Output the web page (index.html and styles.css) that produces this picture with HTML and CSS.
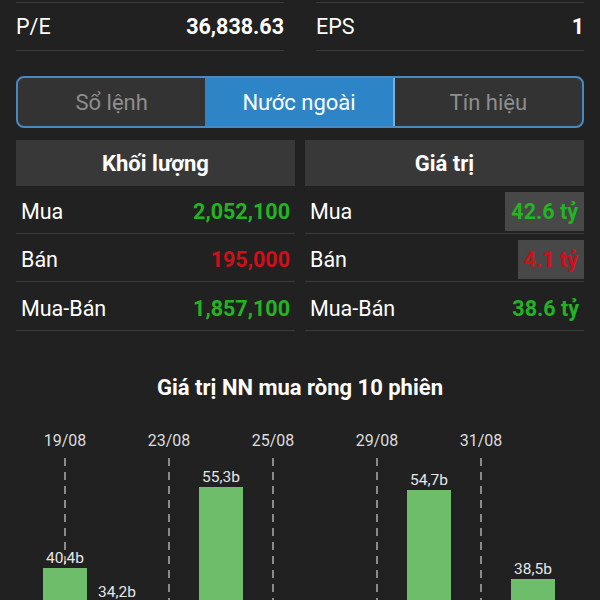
FILE: index.html
```html
<!DOCTYPE html>
<html lang="vi">
<head>
    <meta charset="UTF-8">
    <meta name="viewport" content="width=device-width, initial-scale=1.0">
    <title>Nước ngoài</title>
    <link rel="stylesheet" href="styles.css">
</head>
<body>
    <div class="container">
        <div class="stats">
            <div class="stat-row">
                <span class="stat-label">P/E</span>
                <span class="stat-value">36,838.63</span>
            </div>
            <div class="stat-row">
                <span class="stat-label">EPS</span>
                <span class="stat-value">1</span>
            </div>
        </div>

        <div class="tabs">
            <button class="tab">Sổ lệnh</button>
            <button class="tab active">Nước ngoài</button>
            <button class="tab last">Tín hiệu</button>
        </div>

        <div class="tables">
            <div class="table">
                <div class="table-head">Khối lượng</div>
                <div class="table-row">
                    <span class="row-label">Mua</span>
                    <span class="row-value up">2,052,100</span>
                </div>
                <div class="table-row">
                    <span class="row-label">Bán</span>
                    <span class="row-value down">195,000</span>
                </div>
                <div class="table-row">
                    <span class="row-label">Mua-Bán</span>
                    <span class="row-value up">1,857,100</span>
                </div>
            </div>
            <div class="table">
                <div class="table-head">Giá trị</div>
                <div class="table-row">
                    <span class="row-label">Mua</span>
                    <span class="row-value up boxed">42.6 tỷ</span>
                </div>
                <div class="table-row">
                    <span class="row-label">Bán</span>
                    <span class="row-value down boxed">4.1 tỷ</span>
                </div>
                <div class="table-row">
                    <span class="row-label">Mua-Bán</span>
                    <span class="row-value up">38.6 tỷ</span>
                </div>
            </div>
        </div>

        <h2 class="chart-title">Giá trị NN mua ròng 10 phiên</h2>

        <div class="chart-view">
            <div class="chart" id="chart"></div>
        </div>
    </div>

    <script>
        // giá trị mua ròng (tỷ), mỗi phiên
        const sessions = [
            { date: '19/08', value: 40.4 },
            { date: '', value: 34.2 },
            { date: '23/08', value: 18.6 },
            { date: '', value: 55.3 },
            { date: '25/08', value: 12.9 },
            { date: '', value: 21.4 },
            { date: '29/08', value: 16.2 },
            { date: '', value: 54.7 },
            { date: '31/08', value: 24.8 },
            { date: '', value: 38.5 }
        ];
        const pxPerUnit = 5.44;
        const chart = document.getElementById('chart');

        sessions.forEach(s => {
            const col = document.createElement('div');
            col.className = 'col';

            const date = document.createElement('div');
            date.className = 'date';
            date.textContent = s.date;
            col.appendChild(date);

            const track = document.createElement('div');
            track.className = s.date ? 'track dashed' : 'track';

            const label = document.createElement('div');
            label.className = 'bar-label';
            label.textContent = s.value.toFixed(1).replace('.', ',') + 'b';
            track.appendChild(label);

            const bar = document.createElement('div');
            bar.className = 'bar';
            bar.style.height = Math.round(s.value * pxPerUnit) + 'px';
            track.appendChild(bar);

            col.appendChild(track);
            chart.appendChild(col);
        });
    </script>
</body>
</html>
```

FILE: styles.css
```css
* {
    box-sizing: border-box;
}
body {
    font-family: Roboto, 'Noto Sans', 'DejaVu Sans', sans-serif;
    margin: 0;
    padding: 0;
    background-color: #212121;
    color: #ffffff;
    overflow: hidden;
}
.container {
    padding: 2px 16px 0;
}
.stats {
    display: grid;
    grid-template-columns: 1fr 1fr;
    column-gap: 32px;
}
.stat-row {
    display: flex;
    justify-content: space-between;
    align-items: center;
    height: 49px;
    border-top: 1px solid #3a3a3a;
    border-bottom: 1px solid #3a3a3a;
    font-size: 21.5px;
}
.stat-value {
    font-weight: 700;
}
.tabs {
    display: flex;
    margin-top: 25px;
    height: 52px;
    border: 2px solid #4a8ac3;
    border-radius: 8px;
    overflow: hidden;
    background-color: #333333;
}
.tab {
    flex: 1;
    border: none;
    background: none;
    font-family: inherit;
    font-size: 22px;
    color: #8e8e8e;
    padding: 0;
}
.tab.active {
    background-color: #2d85c7;
    color: #ffffff;
}
.tab.last {
    border-left: 2px solid #7aaed9;
}
.tables {
    display: grid;
    grid-template-columns: 1fr 1fr;
    column-gap: 10px;
    margin-top: 12px;
}
.table-head {
    height: 46px;
    display: flex;
    align-items: center;
    justify-content: center;
    background-color: #383838;
    font-size: 22px;
    font-weight: 700;
}
.table-row {
    display: flex;
    justify-content: space-between;
    align-items: center;
    height: 48px;
    border-bottom: 1px solid #3a3a3a;
    padding: 4px 5px 0;
    font-size: 21.5px;
}
.table-row:first-of-type {
    height: 51px;
}
.table-row:last-child {
    height: 49px;
}
.row-value {
    font-weight: 700;
}
.row-value.up {
    color: #22b422;
}
.row-value.down {
    color: #cf0f19;
}
.row-value.boxed {
    align-self: stretch;
    display: flex;
    align-items: center;
    margin: 2px -5px 2px 0;
    padding: 0 6px;
    background-color: #484848;
}
.chart-title {
    margin: 43px 0 0;
    text-align: center;
    font-size: 22px;
    font-weight: 700;
    line-height: 28px;
}
.chart-view {
    margin-top: 25px;
    height: 174px;
    overflow: hidden;
}
.chart {
    display: flex;
    margin-left: 23px;
    height: 361px;
}
.col {
    width: 52px;
    display: flex;
    flex-direction: column;
    align-items: center;
}
.date {
    height: 31px;
    font-size: 16px;
    color: #dddddd;
    line-height: 28px;
}
.track {
    flex: 1;
    width: 100%;
    display: flex;
    flex-direction: column;
    justify-content: flex-end;
    align-items: center;
}
.track.dashed {
    background-image: repeating-linear-gradient(to bottom, #8a8a8a 0 8px, transparent 8px 14px);
    background-size: 2px 100%;
    background-position: center top;
    background-repeat: no-repeat;
}
.bar-label {
    font-size: 15.5px;
    color: #e6e6e6;
    line-height: 18px;
    margin-bottom: 1px;
}
.bar {
    width: 44px;
    background-color: #6dbd6a;
}
```
